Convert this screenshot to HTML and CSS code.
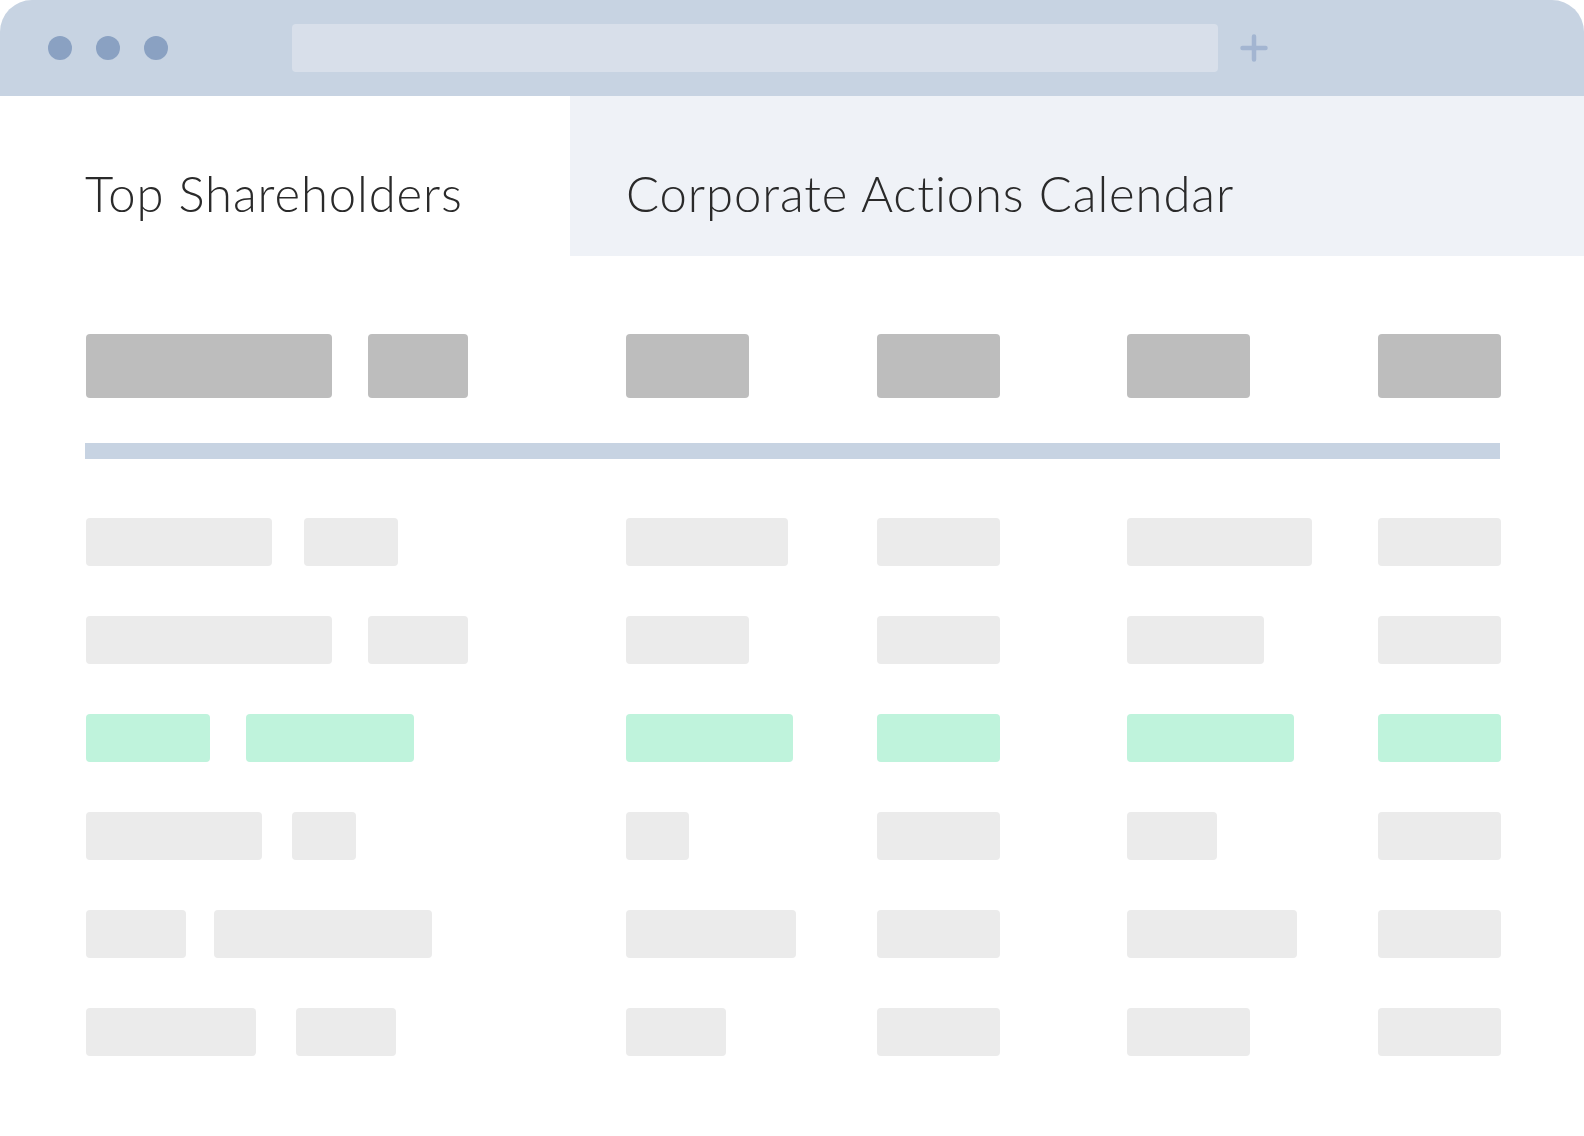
FILE: index.html
```html
<!DOCTYPE html>
<html lang="en">
<head>
<meta charset="utf-8">
<title>Top Shareholders</title>
<link rel="stylesheet" href="styles.css">
</head>
<body>
<div class="window">
  <div class="titlebar">
    <div class="dots"><span class="dot"></span><span class="dot"></span><span class="dot"></span></div>
    <div class="address"></div>
    <svg class="plus" width="28" height="28" viewBox="0 0 28 28"><path d="M14 2.5V25.5M2.5 14H25.5" stroke="#a3b5d1" stroke-width="4.5" stroke-linecap="round" fill="none"/></svg>
  </div>
  <div class="tabs">
    <div class="tab active">Top Shareholders</div>
    <div class="tab inactive">Corporate Actions Calendar</div>
  </div>
  <div class="table">
    <div class="row head">
      <div class="pair"><span class="bar" style="width:246px"></span><span class="bar" style="width:100px;margin-left:36px"></span></div>
      <span class="bar" style="width:123px"></span>
      <span class="bar" style="width:123px"></span>
      <span class="bar" style="width:123px"></span>
      <span class="bar" style="width:123px"></span>
    </div>
    <div class="divider"></div>
    <div class="body">
      <div class="row">
        <div class="pair"><span class="bar" style="width:186px"></span><span class="bar" style="width:94px;margin-left:32px"></span></div>
        <span class="bar" style="width:162px"></span>
        <span class="bar" style="width:123px"></span>
        <span class="bar" style="width:185px"></span>
        <span class="bar" style="width:123px"></span>
      </div>
      <div class="row">
        <div class="pair"><span class="bar" style="width:246px"></span><span class="bar" style="width:100px;margin-left:36px"></span></div>
        <span class="bar" style="width:123px"></span>
        <span class="bar" style="width:123px"></span>
        <span class="bar" style="width:137px"></span>
        <span class="bar" style="width:123px"></span>
      </div>
      <div class="row highlight">
        <div class="pair"><span class="bar" style="width:124px"></span><span class="bar" style="width:168px;margin-left:36px"></span></div>
        <span class="bar" style="width:167px"></span>
        <span class="bar" style="width:123px"></span>
        <span class="bar" style="width:167px"></span>
        <span class="bar" style="width:123px"></span>
      </div>
      <div class="row">
        <div class="pair"><span class="bar" style="width:176px"></span><span class="bar" style="width:64px;margin-left:30px"></span></div>
        <span class="bar" style="width:63px"></span>
        <span class="bar" style="width:123px"></span>
        <span class="bar" style="width:90px"></span>
        <span class="bar" style="width:123px"></span>
      </div>
      <div class="row">
        <div class="pair"><span class="bar" style="width:100px"></span><span class="bar" style="width:218px;margin-left:28px"></span></div>
        <span class="bar" style="width:170px"></span>
        <span class="bar" style="width:123px"></span>
        <span class="bar" style="width:170px"></span>
        <span class="bar" style="width:123px"></span>
      </div>
      <div class="row">
        <div class="pair"><span class="bar" style="width:170px"></span><span class="bar" style="width:100px;margin-left:40px"></span></div>
        <span class="bar" style="width:100px"></span>
        <span class="bar" style="width:123px"></span>
        <span class="bar" style="width:123px"></span>
        <span class="bar" style="width:123px"></span>
      </div>
    </div>
  </div>
</div>
</body>
</html>
```

FILE: styles.css
```css
* { box-sizing: border-box; }
html, body {
  margin: 0;
  padding: 0;
  background: #ffffff;
}
body {
  width: 1584px;
  height: 1136px;
  overflow: hidden;
  font-family: Lato, "Open Sans", "Liberation Sans", sans-serif;
}
.window {
  width: 1584px;
}
.titlebar {
  height: 96px;
  background: #c7d3e2;
  border-radius: 32px 32px 0 0;
  display: flex;
  align-items: center;
  padding-left: 48px;
}
.dots {
  display: flex;
  gap: 24px;
}
.dot {
  width: 24px;
  height: 24px;
  border-radius: 50%;
  background: #8aa1c2;
}
.address {
  margin-left: 124px;
  width: 926px;
  height: 48px;
  border-radius: 4px;
  background: #d8dfea;
}
.plus {
  margin-left: 22px;
  display: block;
}
.tabs {
  display: flex;
  height: 160px;
}
.tab {
  font-weight: 300;
  font-size: 49px;
  letter-spacing: 0.9px;
  color: #2a2a2a;
  line-height: 1;
  padding-top: 73px;
  white-space: nowrap;
}
.tab.active {
  width: 570px;
  padding-left: 85px;
  background: #ffffff;
}
.tab.inactive {
  flex: 1;
  padding-left: 56px;
  background: #eff2f7;
}
.table {
  padding: 78px 84px 0 86px;
}
.row {
  display: grid;
  grid-template-columns: 540px 251px 250px 251px 123px;
  height: 48px;
}
.row.head {
  height: 64px;
}
.pair {
  display: flex;
}
.bar {
  display: block;
  height: 100%;
  border-radius: 4px;
  background: #ebebeb;
}
.head .bar {
  background: #bdbdbd;
}
.highlight .bar {
  background: #bff3dc;
}
.divider {
  height: 16px;
  margin: 45px 0 59px -1px;
  width: 1415px;
  background: #c7d3e2;
}
.body {
  display: flex;
  flex-direction: column;
  gap: 50px;
}
```
